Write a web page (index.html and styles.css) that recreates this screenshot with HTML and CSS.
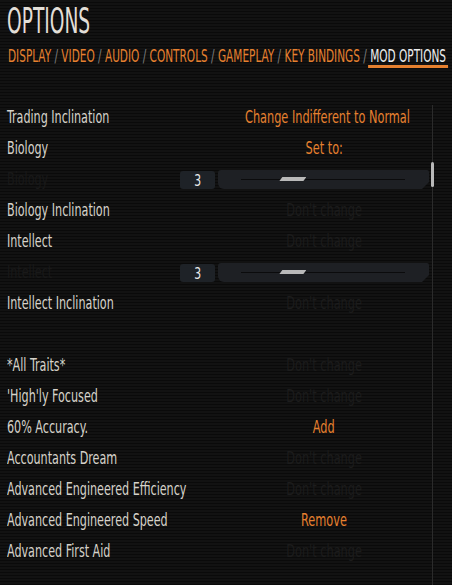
FILE: index.html
```html
<!DOCTYPE html>
<html lang="en">
<head>
<meta charset="utf-8">
<title>Options</title>
<link rel="stylesheet" href="styles.css">
</head>
<body>
<div class="screen">
  <header class="header">
    <h1 class="title"><span class="title-text">OPTIONS</span></h1>
    <nav class="tabs"><span class="tab">DISPLAY</span> <span class="sep">/</span> <span class="tab">VIDEO</span> <span class="sep">/</span> <span class="tab">AUDIO</span> <span class="sep">/</span> <span class="tab">CONTROLS</span> <span class="sep">/</span> <span class="tab">GAMEPLAY</span> <span class="sep">/</span> <span class="tab">KEY BINDINGS</span> <span class="sep">/</span> <span class="tab active">MOD OPTIONS</span></nav>
  </header>

  <main class="list">
    <div class="row"><span class="label"><span class="txt">Trading Inclination</span></span><span class="value orange"><span class="txt">Change Indifferent to Normal</span></span></div>
    <div class="row"><span class="label"><span class="txt">Biology</span></span><span class="value orange"><span class="txt">Set to:</span></span></div>
    <div class="row slider-row">
      <span class="label dim"><span class="txt">Biology</span></span>
      <span class="numbox"><span class="txt">3</span></span>
      <span class="track"><span class="rail"><span class="thumb" style="left:24%"></span></span></span>
    </div>
    <div class="row"><span class="label"><span class="txt">Biology Inclination</span></span><span class="value dim"><span class="txt">Don't change</span></span></div>
    <div class="row"><span class="label"><span class="txt">Intellect</span></span><span class="value dim"><span class="txt">Don't change</span></span></div>
    <div class="row slider-row">
      <span class="label dim"><span class="txt">Intellect</span></span>
      <span class="numbox"><span class="txt">3</span></span>
      <span class="track"><span class="rail"><span class="thumb" style="left:24%"></span></span></span>
    </div>
    <div class="row"><span class="label"><span class="txt">Intellect Inclination</span></span><span class="value dim"><span class="txt">Don't change</span></span></div>
    <div class="row spacer"></div>
    <div class="row"><span class="label"><span class="txt">*All Traits*</span></span><span class="value dim"><span class="txt">Don't change</span></span></div>
    <div class="row"><span class="label"><span class="txt">'High'ly Focused</span></span><span class="value dim"><span class="txt">Don't change</span></span></div>
    <div class="row"><span class="label"><span class="txt">60% Accuracy.</span></span><span class="value orange"><span class="txt">Add</span></span></div>
    <div class="row"><span class="label"><span class="txt">Accountants Dream</span></span><span class="value dim"><span class="txt">Don't change</span></span></div>
    <div class="row"><span class="label"><span class="txt">Advanced Engineered Efficiency</span></span><span class="value dim"><span class="txt">Don't change</span></span></div>
    <div class="row"><span class="label"><span class="txt">Advanced Engineered Speed</span></span><span class="value orange"><span class="txt">Remove</span></span></div>
    <div class="row"><span class="label"><span class="txt">Advanced First Aid</span></span><span class="value dim"><span class="txt">Don't change</span></span></div>

    <div class="scrollbar"><div class="scroll-thumb"></div></div>
  </main>
</div>
</body>
</html>
```

FILE: styles.css
```css
html, body {
  margin: 0;
  padding: 0;
  background: #0e0e0e;
}

.screen {
  width: 452px;
  height: 585px;
  overflow: hidden;
  background: repeating-linear-gradient(to bottom, #121212 0, #121212 2px, #0a0a0a 2px, #0a0a0a 3px);
  font-family: "DejaVu Sans Condensed", "DejaVu Sans", sans-serif;
  font-stretch: condensed;
  color: #d6d2ca;
}

.header {
  padding: 3px 0 0 7px;
}

.title {
  margin: 0;
  font-size: 36px;
  line-height: 36px;
  font-weight: normal;
  color: #e2ded7;
  white-space: nowrap;
}

.title-text {
  display: inline-block;
  transform: scaleX(0.575);
  transform-origin: 0 0;
}

.tabs {
  width: max-content;
  margin-top: 7px;
  margin-left: 1px;
  font-size: 18px;
  line-height: 20px;
  white-space: nowrap;
  transform: scaleX(0.65);
  transform-origin: 0 0;
}

.tab {
  color: #e6802f;
}

.sep {
  color: #7c7c7c;
}

.tab.active {
  color: #eeeeee;
  padding: 0 3px 2px;
  margin: 0 -3px;
  background: linear-gradient(#e6802f, #e6802f) left bottom / 100% 3px no-repeat;
}

.list {
  position: relative;
  margin-top: 36px;
  padding: 0 20px 0 7px;
}

.row {
  display: grid;
  grid-template-columns: 209px 1fr;
  align-items: center;
  height: 31px;
  font-size: 17px;
  line-height: 31px;
  white-space: nowrap;
}

.label .txt {
  display: inline-block;
  transform: scaleX(0.73);
  transform-origin: 0 50%;
}

.value {
  text-align: center;
}

.value .txt {
  display: inline-block;
  transform: scaleX(0.74);
  transform-origin: 50% 50%;
}

.orange {
  color: #e6802f;
}

.dim {
  color: #1c1c1c;
}

.label.dim {
  color: #191919;
}

.slider-row {
  grid-template-columns: 173px 35px 214px;
}

.numbox {
  height: 18px;
  margin-top: 1px;
  border-radius: 3px;
  background: #1e2227;
  color: #ececec;
  text-align: center;
  line-height: 19px;
  font-size: 16px;
}

.numbox .txt {
  display: inline-block;
  transform: scaleX(0.75);
}

.track {
  position: relative;
  height: 19px;
  margin-left: 3px;
  background: #1e2024;
  border-radius: 3px 2px 0 6px;
  clip-path: polygon(0 0, 100% 0, 100% calc(100% - 7px), calc(100% - 7px) 100%, 0 100%);
}

.rail {
  position: absolute;
  left: 23px;
  right: 24px;
  top: 9px;
  height: 1px;
  background: #0b0b0c;
}

.thumb {
  position: absolute;
  top: -2px;
  width: 27px;
  height: 4px;
  margin-left: -1px;
  background: #b9b9b9;
  clip-path: polygon(3px 0, 100% 0, calc(100% - 3px) 100%, 0 100%);
}

.scrollbar {
  position: absolute;
  left: 432px;
  top: 3px;
  width: 1px;
  height: 500px;
  background: #2b2b2b;
}

.scroll-thumb {
  position: absolute;
  left: -1px;
  top: 57px;
  width: 3px;
  height: 25px;
  border-radius: 1.5px;
  background: #b8b8b8;
}
```
